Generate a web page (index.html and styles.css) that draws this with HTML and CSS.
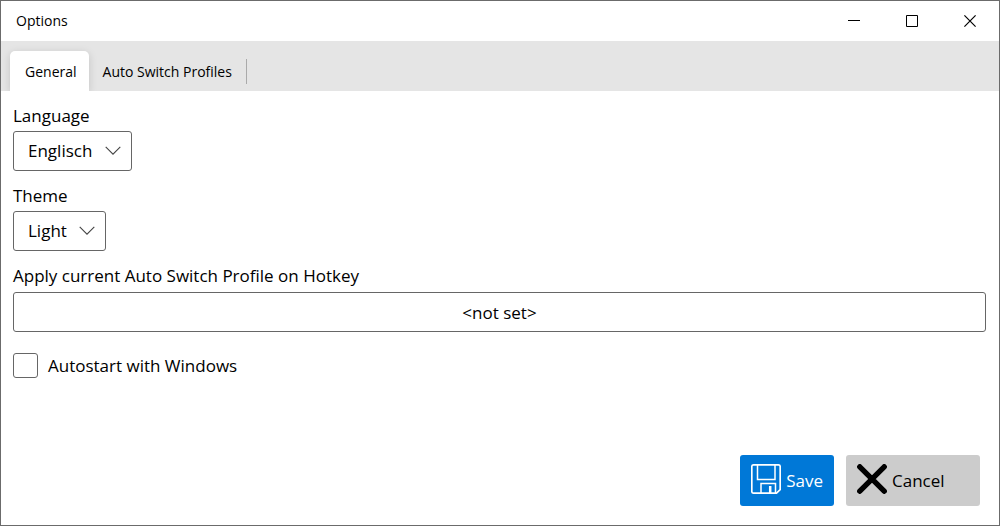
FILE: index.html
```html
<!DOCTYPE html>
<html lang="en">
<head>
<meta charset="utf-8">
<meta name="viewport" content="width=device-width, initial-scale=1">
<title>Options</title>
<link rel="stylesheet" href="styles.css">
</head>
<body>
<div class="window">
  <header class="titlebar">
    <h1 class="title">Options</h1>
    <div class="window-controls">
      <button class="window-button" type="button" aria-label="Minimize">
        <svg width="12" height="12" viewBox="0 0 12 12"><path d="M0 5.5h12" stroke="#000"/></svg>
      </button>
      <button class="window-button" type="button" aria-label="Maximize">
        <svg width="12" height="12" viewBox="0 0 12 12"><path d="M.5 .5h11v11H.5z" fill="none" stroke="#000"/></svg>
      </button>
      <button class="window-button" type="button" aria-label="Close">
        <svg width="12" height="12" viewBox="0 0 12 12"><path d="M.4 .4l11.2 11.2M11.6 .4L.4 11.6" stroke="#000" stroke-width="1.2"/></svg>
      </button>
    </div>
  </header>
  <div class="tabs" role="tablist">
    <button class="tab tab-active" type="button" role="tab" aria-selected="true">General</button>
    <button class="tab" type="button" role="tab" aria-selected="false">Auto Switch Profiles</button>
  </div>
  <main class="content">
    <div class="field">
      <label for="language">Language</label>
      <div class="dropdown">
        <select id="language" class="select"><option>Englisch</option></select>
        <svg class="chevron" width="16" height="10" viewBox="0 0 16 10"><path d="M.7 .8L8 8.1 15.3 .8" fill="none" stroke="#444" stroke-width="1.1"/></svg>
      </div>
    </div>
    <div class="field">
      <label for="theme">Theme</label>
      <div class="dropdown">
        <select id="theme" class="select"><option>Light</option></select>
        <svg class="chevron" width="16" height="10" viewBox="0 0 16 10"><path d="M.7 .8L8 8.1 15.3 .8" fill="none" stroke="#444" stroke-width="1.1"/></svg>
      </div>
    </div>
    <div class="field">
      <label for="hotkey">Apply current Auto Switch Profile on Hotkey</label>
      <input id="hotkey" class="hotkey" type="text" value="&lt;not set&gt;" readonly>
    </div>
    <div class="check-row">
      <input id="autostart" class="checkbox" type="checkbox">
      <label for="autostart">Autostart with Windows</label>
    </div>
  </main>
  <footer class="actions">
    <button class="action save" type="button">
      <svg class="action-icon" width="30" height="30" viewBox="0 0 30 30" fill="none" stroke="#fff">
        <path d="M2.5 .9h25a1.7 1.7 0 0 1 1.7 1.7v22.9l-3.7 3.6h-23a1.7 1.7 0 0 1-1.7-1.7V2.6A1.7 1.7 0 0 1 2.5 .9z" stroke-width="1.7"/>
        <path d="M6.5 1v14.5h17.5V1M10 29V19.5h14.5V29M18.7 29v-6.3h1V29" stroke-width="1.5"/>
      </svg>
      Save
    </button>
    <button class="action cancel" type="button">
      <svg class="action-icon" width="30" height="30" viewBox="0 0 30 30"><path d="M2.8 2.8l24.4 24.4M27.2 2.8L2.8 27.2" stroke="#000" stroke-width="5.4" stroke-linecap="round"/></svg>
      Cancel
    </button>
  </footer>
</div>
</body>
</html>
```
FILE: styles.css
```css
* {
  box-sizing: border-box;
}

body {
  margin: 0;
  background: #fff;
  color: #000;
  font: 17px/24px "Open Sans", "Noto Sans", sans-serif;
}

button,
input,
select {
  margin: 0;
  font: inherit;
  color: inherit;
}

button {
  padding: 0;
  border: 0;
  background: none;
}

svg {
  display: block;
  flex: none;
}

.window {
  display: flex;
  flex-direction: column;
  min-height: 100vh;
  border: 1px solid #6b6b6b;
}

.titlebar {
  display: flex;
  justify-content: space-between;
  height: 40px;
  padding-left: 15px;
}

.title {
  margin: 0;
  font-size: 14px;
  font-weight: 400;
  line-height: 40px;
}

.window-controls {
  display: flex;
}

.window-button {
  display: flex;
  align-items: center;
  justify-content: center;
  width: 58px;
}

.tabs {
  display: flex;
  height: 50px;
  padding: 10px 9px 0;
  overflow: hidden;
  background: #e5e5e5;
}

.tab {
  position: relative;
  padding: 2px 15px 0 14px;
  font-size: 14px;
}

.tab:not(.tab-active)::after {
  content: "";
  position: absolute;
  top: 8px;
  right: 0;
  width: 1px;
  height: 25px;
  background: #aaa;
}

.tab-active {
  padding: 2px 12px 0 15px;
  border-radius: 5px 5px 0 0;
  background: #fff;
  box-shadow: 0 2px 8px rgba(0, 0, 0, 0.15);
}

.content {
  display: flex;
  flex: 1;
  flex-direction: column;
  gap: 13px;
  padding: 13px 13px 13px 12px;
}

.field {
  display: flex;
  flex-direction: column;
  align-items: flex-start;
  gap: 3px;
}

.dropdown {
  position: relative;
}

.select {
  display: block;
  height: 40px;
  padding: 0 38px 0 14px;
  border: 1px solid #666;
  border-radius: 3px;
  appearance: none;
  background: #fff;
}

.chevron {
  position: absolute;
  top: 15px;
  right: 11px;
  pointer-events: none;
}

.hotkey {
  width: 100%;
  height: 40px;
  margin-top: 1px;
  border: 1px solid #666;
  border-radius: 3px;
  text-align: center;
}

.check-row {
  display: flex;
  align-items: center;
  gap: 10px;
  padding-top: 8px;
}

.checkbox {
  width: 25px;
  height: 25px;
  border: 1px solid #666;
  border-radius: 3px;
  appearance: none;
  background: #fff;
}

.checkbox:checked {
  background: #0078d7;
}

.actions {
  display: flex;
  justify-content: flex-end;
  gap: 12px;
  padding: 0 19px 19px;
}

.action {
  display: flex;
  align-items: center;
  gap: 5px;
  height: 51px;
  padding: 0 11px;
  border-radius: 3px;
}

.action-icon {
  margin-bottom: 3px;
}

.save {
  background: #0078d7;
  color: #fff;
}

.cancel {
  min-width: 134px;
  background: #ccc;
}
```
